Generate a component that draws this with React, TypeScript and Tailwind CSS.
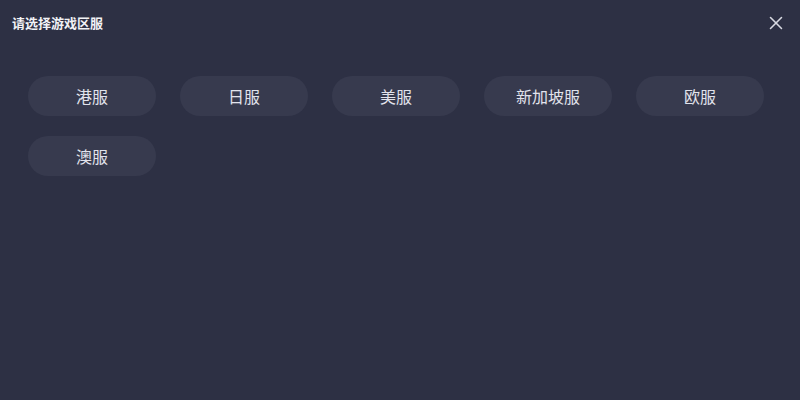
import { X } from "lucide-react";

const servers = ["港服", "日服", "美服", "新加坡服", "欧服", "澳服"];

export default function App() {
  return (
    <div
      className="h-[400px] w-[800px] bg-[#2d3044] text-white"
      style={{ fontFamily: '"Noto Sans CJK SC", "Microsoft YaHei", sans-serif' }}
    >
      <div className="flex h-[48px] items-center justify-between pb-0.5 pl-3 pr-[13px]">
        <span className="text-[13px] font-semibold text-[#f2f2f6]">请选择游戏区服</span>
        <button className="text-[#d8d9e2]">
          <X size={22} strokeWidth={1.7} />
        </button>
      </div>
      <div className="grid grid-cols-[repeat(5,128px)] gap-x-6 gap-y-5 px-7 pt-7">
        {servers.map((s) => (
          <button
            key={s}
            className="flex h-10 items-center justify-center rounded-full bg-[#373a4e] text-base text-[#e2e3ec]"
          >
            {s}
          </button>
        ))}
      </div>
    </div>
  );
}
